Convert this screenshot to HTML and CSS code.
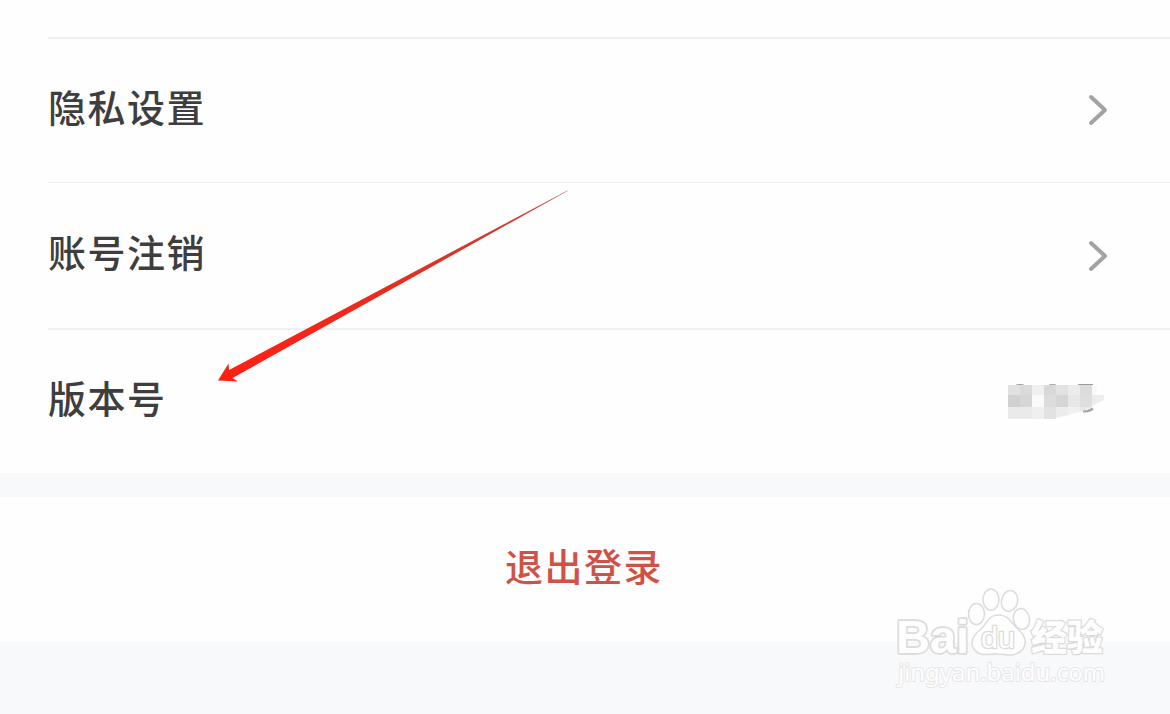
FILE: index.html
```html
<!DOCTYPE html>
<html lang="zh-CN">
<head>
    <meta charset="UTF-8">
    <meta name="viewport" content="width=device-width, initial-scale=1.0">
    <title>设置</title>
    <link rel="stylesheet" href="styles.css">
</head>
<body>
    <main class="settings">
        <div class="list">
            <a href="#privacy" class="item">
                <span class="label">隐私设置</span>
                <svg class="chevron" viewBox="0 0 20 32" fill="none">
                    <path d="M3 3 L17 16 L3 29" stroke="#a3a3a3" stroke-width="4" stroke-linecap="round" stroke-linejoin="round"/>
                </svg>
            </a>
            <a href="#cancel" class="item">
                <span class="label">账号注销</span>
                <svg class="chevron" viewBox="0 0 20 32" fill="none">
                    <path d="M3 3 L17 16 L3 29" stroke="#a3a3a3" stroke-width="4" stroke-linecap="round" stroke-linejoin="round"/>
                </svg>
            </a>
            <div class="item">
                <span class="label">版本号</span>
                <!-- Hidden version number -->
                <svg class="mosaic" viewBox="0 0 98 36">
                    <path fill="none" stroke="#9b9b9b" d="M8 1q4-1 8 0M41 1q4-1 7 0M70 .5h15"/>
                    <g shape-rendering="crispEdges">
                        <path fill="#e1e1e1" d="M0 1h12v10H0z"/>
                        <path fill="#dadada" d="M12 1h12v10H12z"/>
                        <path fill="#f0f0f0" d="M24 1h12v10H24z"/>
                        <path fill="#d8d8d8" d="M36 1h12v10H36z"/>
                        <path fill="#e2e2e2" d="M48 1h12v10H48z"/>
                        <path fill="#ececec" d="M60 1h12v10H60z"/>
                        <path fill="#dcdcdc" d="M72 1h12v10H72z"/>
                        <path fill="#f9f9f9" d="M84 1h5v10h-5z"/>
                        <path fill="#d1d1d1" d="M0 11h12v12H0z"/>
                        <path fill="#d6d6d6" d="M12 11h12v12H12z"/>
                        <path fill="#fafafa" d="M24 11h12v12H24z"/>
                        <path fill="#dcdcdc" d="M36 11h12v12H36z"/>
                        <path fill="#d5d5d5" d="M48 11h12v12H48z"/>
                        <path fill="#e7e7e7" d="M60 11h12v12H60z"/>
                        <path fill="#dedede" d="M72 11h12v12H72z"/>
                        <path fill="#eaeaea" d="M0 23h24v12H0z"/>
                        <path fill="#efefef" d="M24 23h12v12H24z"/>
                        <path fill="#e2e2e2" d="M36 23h12v12H36z"/>
                    </g>
                    <path fill="#ededed" d="M84 11h12v5l-12 6z"/>
                    <path fill="#ececec" d="M48 23h12v8l-12 3z"/>
                    <path fill="#f0f0f0" d="M60 23h12v5l-12 3z"/>
                    <path fill="#e7e7e7" d="M72 23h12l-12 5z"/>
                    <path fill="none" stroke="#a6a6a6" stroke-width="2.2" d="M75 27.500q6 0 10-3"/>
                </svg>
            </div>
        </div>
        <button class="logout">退出登录</button>
    </main>

    <svg class="arrow" viewBox="0 0 352 192">
        <defs>
            <linearGradient id="arrowFill" x1="0" y1="1" x2="1" y2="0">
                <stop offset="0" stop-color="#ff2015"/>
                <stop offset="0.4" stop-color="#f0281c"/>
                <stop offset="0.8" stop-color="#d03a30"/>
                <stop offset="1" stop-color="#c05a54"/>
            </linearGradient>
        </defs>
        <path fill="url(#arrowFill)" d="M0 190.500 L10.500 173.500 L11 180 L349.500 0.500 L349.500 1 L14.500 188 L20 191.500 Z"/>
    </svg>

    <svg class="watermark" viewBox="0 0 220 110">
        <g class="wm-shape">
            <ellipse cx="86.500" cy="34" rx="8" ry="10.500"/>
            <ellipse cx="101" cy="19.500" rx="8" ry="10.500"/>
            <ellipse cx="119.500" cy="21" rx="8" ry="10.500" transform="rotate(12 119.500 21)"/>
            <ellipse cx="131.500" cy="39" rx="8" ry="10.500" transform="rotate(-10 131.500 39)"/>
            <path d="M108.500 35 C98 35 97 44 91 49 C82 56 80 63 84 69 C90 78 99 73 108.500 74 C118 75 127 77 133 69 C138 61 134 55 128 49 C121 43 119 35 108.500 35 Z"/>
        </g>
        <text class="wm-logo" x="6" y="73" textLength="73" lengthAdjust="spacingAndGlyphs">Bai</text>
        <text class="wm-du" x="91" y="68" textLength="34" lengthAdjust="spacingAndGlyphs">du</text>
        <text class="wm-cn" x="141" y="71" textLength="72" lengthAdjust="spacingAndGlyphs">经验</text>
        <text class="wm-url" x="8" y="101" textLength="207" lengthAdjust="spacingAndGlyphs">jingyan.baidu.com</text>
    </svg>
</body>
</html>
```

FILE: styles.css
```css
* {
    margin: 0;
    padding: 0;
    box-sizing: border-box;
}

body {
    position: relative;
    height: 714px;
    overflow: hidden;
    font-family: 'Noto Sans CJK SC', sans-serif;
    background: #f8f9fb;
    color: #3e3e3e;
}

.settings {
    display: flex;
    flex-direction: column;
    gap: 24px;
}

.list {
    padding: 37px 0 0 48px;
    background: #fefefe;
}

.item {
    display: flex;
    justify-content: space-between;
    align-items: center;
    height: 145px;
    padding-right: 62px;
    border-top: 2px solid #f0f0f0;
    color: inherit;
    text-decoration: none;
}

.item:first-child {
    padding-bottom: 1px;
}

.item:nth-child(2) {
    height: 146px;
    border-top-width: 1px;
}

.label {
    padding-bottom: 9px;
    font-size: 38px;
    font-weight: 500;
    line-height: 56px;
    letter-spacing: 1.5px;
}

.chevron {
    width: 20px;
    height: 32px;
}

.mosaic {
    width: 98px;
    height: 36px;
    margin-right: 2px;
}

.logout {
    height: 145px;
    padding: 0 2px 10px 0;
    border: none;
    background: #fefefe;
    color: #d05145;
    font-family: inherit;
    font-size: 38px;
    font-weight: 500;
    letter-spacing: 1.5px;
}

.arrow {
    position: absolute;
    left: 218px;
    top: 190px;
    width: 352px;
    height: 192px;
}

.watermark {
    position: absolute;
    left: 890px;
    top: 580px;
    width: 220px;
    height: 110px;
}

.wm-shape,
.watermark text {
    fill: #fefefe;
    stroke: #dcdcdc;
    stroke-width: 1.5px;
}

.watermark text {
    paint-order: stroke;
    stroke-width: 2.5px;
    stroke-linejoin: round;
}

.watermark .wm-logo {
    font: bold 47px 'Liberation Sans', sans-serif;
    stroke-width: 3.5px;
}

.watermark .wm-du {
    font: 29px 'Liberation Sans', sans-serif;
}

.wm-cn {
    font: 900 36px 'Noto Sans CJK SC', sans-serif;
}

.watermark .wm-url {
    font: 24px 'Noto Sans', sans-serif;
    stroke: #e6e6e7;
    stroke-width: 2px;
}
```
